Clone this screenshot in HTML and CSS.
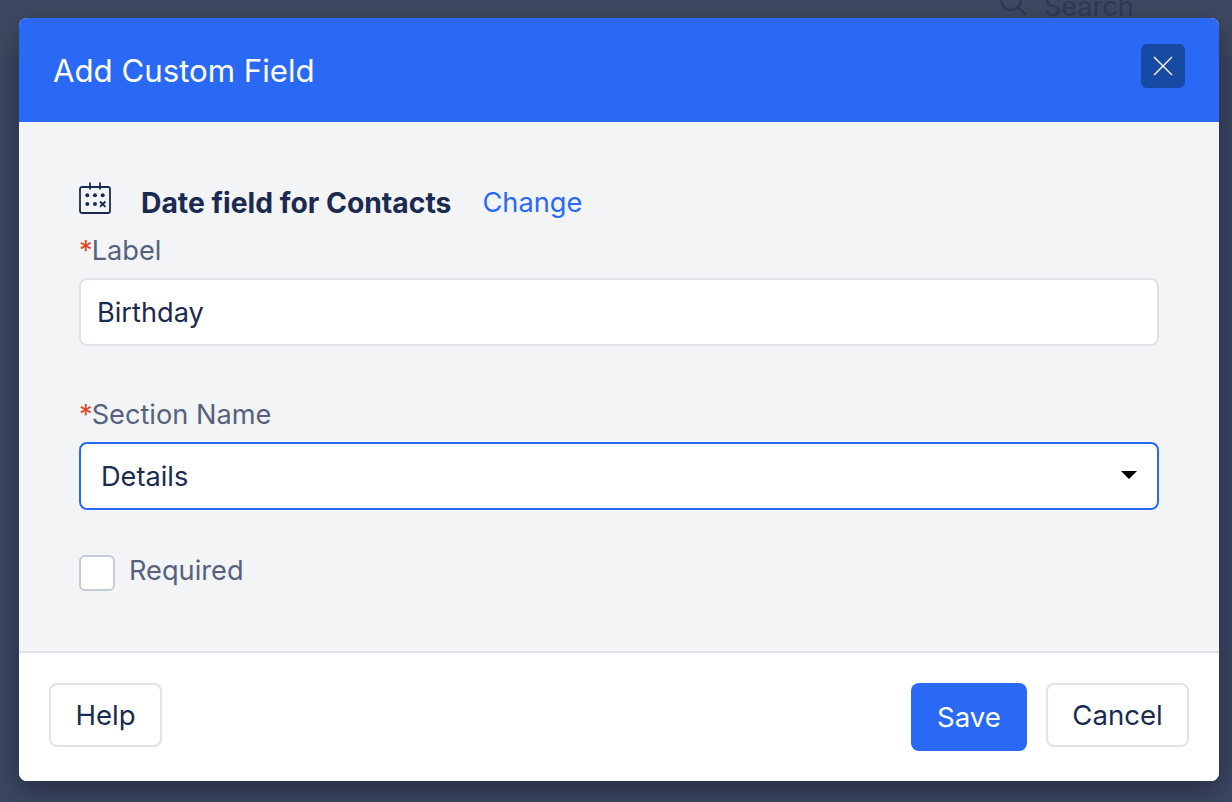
FILE: index.html
```html
<!DOCTYPE html>
<html lang="en">
<head>
<meta charset="utf-8">
<title>Add Custom Field</title>
<link rel="stylesheet" href="styles.css">
</head>
<body>
<div class="backdrop">
  <div class="topbar">
    <div class="search">
      <svg class="search-icon" width="30" height="30" viewBox="0 0 30 30" fill="none" stroke="currentColor" stroke-width="2.4"><circle cx="12" cy="10" r="10"/><path d="M19.5 17.5l7.5 7.5"/></svg>
      <span class="search-text">Search</span>
    </div>
  </div>
</div>
<div class="modal">
  <header class="modal-head">
    <h1 class="modal-title">Add Custom Field</h1>
    <button class="close" type="button" aria-label="Close">
      <svg width="20" height="20" viewBox="0 0 20 20" fill="none" stroke="#fff" stroke-width="1.4"><path d="M1 1l18 18M19 1L1 19"/></svg>
    </button>
  </header>
  <main class="modal-body">
    <div class="type-row">
      <svg class="cal" width="32" height="32" viewBox="0 0 32 32" fill="none">
        <rect x="1" y="5" width="30" height="26" rx="2" stroke="#1b2b4f" stroke-width="1.8"/>
        <path d="M11 0.5v7M21 0.5v7" stroke="#1b2b4f" stroke-width="1.8"/>
        <g fill="#1b2b4f"><circle cx="8.3" cy="13.3" r="2"/><circle cx="16" cy="13.3" r="2"/><circle cx="23.7" cy="13.3" r="2"/><circle cx="8.3" cy="22" r="2"/><circle cx="16" cy="22" r="2"/></g>
        <path d="M21 19.5l5.4 5.4M26.4 19.5L21 24.9" stroke="#1b2b4f" stroke-width="1.8"/>
      </svg>
      <strong class="type-name">Date field for Contacts</strong>
      <a class="change" href="#">Change</a>
    </div>
    <label class="field-label"><span class="req">*</span>Label</label>
    <div class="input">Birthday</div>
    <label class="field-label second"><span class="req">*</span>Section Name</label>
    <div class="select"><span>Details</span><i class="caret"></i></div>
    <div class="check-row"><span class="check"></span><span class="check-label">Required</span></div>
  </main>
  <footer class="modal-foot">
    <button class="btn" type="button">Help</button>
    <div class="foot-right">
      <button class="btn primary" type="button">Save</button>
      <button class="btn cancel" type="button">Cancel</button>
    </div>
  </footer>
</div>
</body>
</html>
```
FILE: styles.css
```css
* { box-sizing: border-box; }
html, body { margin: 0; height: 100%; }
body {
  width: 1232px;
  height: 802px;
  overflow: hidden;
  font-family: Inter, "Liberation Sans", sans-serif;
  color: #1b2b4f;
  position: relative;
}
.backdrop {
  height: 802px;
  background: #3d4763;
}
.topbar {
  height: 58px;
  display: flex;
  justify-content: flex-end;
  background: #3f4a62;
  border-bottom: 1px solid #38425a;
}
.search {
  display: flex;
  align-items: flex-start;
  gap: 15px;
  width: 233px;
  margin-top: -10px;
  color: #303a55;
}
.search-text { font-size: 27px; line-height: 33px; margin-top: 0; }
.modal {
  position: absolute;
  left: 19px;
  top: 18px;
  width: 1200px;
  height: 763px;
  border-radius: 8px;
  overflow: hidden;
  display: flex;
  flex-direction: column;
  background: #fff;
  box-shadow: 0 10px 30px rgba(20, 24, 38, 0.55);
}
.modal-head {
  height: 104px;
  flex: none;
  background: #2a69f6;
  display: flex;
  align-items: center;
  justify-content: space-between;
  padding: 0 34px 0 35px;
}
.modal-title {
  margin: 2px 0 0 -1px;
  font-size: 31.2px;
  font-weight: 400;
  line-height: 36px;
  color: #fff;
}
.close {
  width: 44px;
  height: 44px;
  padding: 0;
  border: 0;
  border-radius: 6px;
  background: #174ba3;
  display: flex;
  align-items: center;
  justify-content: center;
  margin-top: -8px;
}
.modal-body {
  flex: 1;
  background: #f3f4f6;
  padding: 58px 60px 0;
}
.type-row {
  display: flex;
  align-items: center;
  height: 44px;
}
.cal { flex: none; margin-top: -8px; }
.type-name {
  margin-left: 30px;
  margin-top: 1px;
  font-size: 28.3px;
  font-weight: 700;
  color: #1b2b4f;
}
.change {
  margin-left: 31px;
  font-size: 27.2px;
  color: #2a69f6;
  text-decoration: none;
}
.field-label {
  display: block;
  margin-top: 6px;
  font-size: 27.2px;
  line-height: 42px;
  height: 38px;
  color: #56627d;
}
.field-label.second { margin-top: 49px; line-height: 40px; }
.req { color: #d9482b; margin-right: -1px; }
.input, .select {
  height: 68px;
  width: 1080px;
  background: #fff;
  border-radius: 8px;
  font-size: 27.2px;
  color: #1b2b4f;
  display: flex;
  align-items: center;
}
.input {
  margin-top: 10px;
  border: 2px solid #dfe2e9;
  padding: 0 16px;
}
.select {
  margin-top: 9px;
  border: 2px solid #2a69f6;
  padding: 0 20px;
  justify-content: space-between;
}
.caret {
  width: 0;
  height: 0;
  border-left: 8px solid transparent;
  border-right: 8px solid transparent;
  border-top: 8px solid #000;
  margin-top: -2px;
}
.check-row {
  display: flex;
  align-items: center;
  margin-top: 44px;
  gap: 14px;
  height: 38px;
}
.check {
  width: 36px;
  height: 36px;
  background: #fff;
  border: 2px solid #c6ccd7;
  border-radius: 6px;
}
.check-label { font-size: 27.2px; color: #56627d; margin-top: -6px; }
.modal-foot {
  height: 130px;
  flex: none;
  background: #fff;
  border-top: 2px solid #e1e3ea;
  display: flex;
  align-items: flex-start;
  justify-content: space-between;
  padding: 30px 30px 0;
}
.foot-right { display: flex; gap: 19px; align-items: flex-start; }
.btn {
  height: 64px;
  width: 113px;
  background: #fff;
  border: 2px solid #e1e3ea;
  border-radius: 8px;
  font: 400 27.6px Inter, "Liberation Sans", sans-serif;
  color: #1b2b4f;
  padding: 0;
}
.btn.primary {
  height: 68px;
  width: 116px;
  background: #2a69f6;
  border: 0;
  color: #fff;
}
.btn.cancel { width: 143px; }
```
